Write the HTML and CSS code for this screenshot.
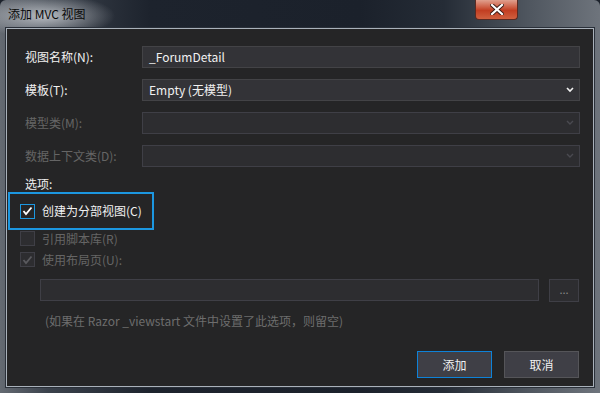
FILE: index.html
```html
<!DOCTYPE html>
<html lang="zh-CN">
<head>
  <meta charset="UTF-8">
  <title>添加 MVC 视图</title>
  <link rel="stylesheet" href="styles.css">
</head>
<body>
  <div class="window">
    <div class="titlebar">
      <span class="title">添加 MVC 视图</span>
      <button class="close-btn">
        <svg width="14" height="11" viewBox="0 0 14 11">
          <path d="M2 1 L12 10 M12 1 L2 10" stroke="#3a1a14" stroke-width="4" stroke-linecap="square"/>
          <path d="M2 1 L12 10 M12 1 L2 10" stroke="#ffffff" stroke-width="2.2" stroke-linecap="square"/>
        </svg>
      </button>
    </div>

    <div class="client">
      <div class="field">
        <label class="field-label">视图名称(N):</label>
        <div class="box">_ForumDetail</div>
      </div>
      <div class="field">
        <label class="field-label">模板(T):</label>
        <div class="box select">
          <span>Empty (无模型)</span>
          <svg class="chev" width="8" height="6" viewBox="0 0 8 6"><path d="M1 1 L4 4 L7 1" fill="none" stroke="#f1f1f1" stroke-width="1.6"/></svg>
        </div>
      </div>
      <div class="field disabled">
        <label class="field-label">模型类(M):</label>
        <div class="box select">
          <span></span>
          <svg class="chev" width="8" height="6" viewBox="0 0 8 6"><path d="M1 1 L4 4 L7 1" fill="none" stroke="#4a4a50" stroke-width="1.4"/></svg>
        </div>
      </div>
      <div class="field disabled">
        <label class="field-label">数据上下文类(D):</label>
        <div class="box select">
          <span></span>
          <svg class="chev" width="8" height="6" viewBox="0 0 8 6"><path d="M1 1 L4 4 L7 1" fill="none" stroke="#4a4a50" stroke-width="1.4"/></svg>
        </div>
      </div>

      <div class="section-title">选项:</div>

      <div class="focus-box">
        <div class="check-row">
          <span class="check checked">
            <svg width="11" height="10" viewBox="0 0 11 10"><path d="M1.5 5 L4 8 L9.5 1.5" fill="none" stroke="#ffffff" stroke-width="1.8"/></svg>
          </span>
          <span>创建为分部视图(C)</span>
        </div>
      </div>
      <div class="check-row disabled">
        <span class="check"></span>
        <span>引用脚本库(R)</span>
      </div>
      <div class="check-row disabled">
        <span class="check">
          <svg width="11" height="10" viewBox="0 0 11 10"><path d="M1.5 5 L4 8 L9.5 1.5" fill="none" stroke="#5a5a5e" stroke-width="1.8"/></svg>
        </span>
        <span>使用布局页(U):</span>
      </div>

      <div class="layout-row">
        <div class="box layout-input"></div>
        <button class="browse">...</button>
      </div>
      <div class="hint">(如果在 Razor _viewstart 文件中设置了此选项，则留空)</div>

      <div class="actions">
        <button class="btn primary">添加</button>
        <button class="btn">取消</button>
      </div>
    </div>
  </div>
</body>
</html>
```

FILE: styles.css
```css
html, body {
  margin: 0;
  padding: 0;
}
body {
  width: 600px;
  height: 393px;
  overflow: hidden;
  background: #1c222b;
  font-family: "Noto Sans CJK SC", "Microsoft YaHei", sans-serif;
  font-size: 12px;
}
.window {
  width: 600px;
  height: 393px;
  box-sizing: border-box;
  padding: 0 6px 6px 6px;
  display: flex;
  flex-direction: column;
  border-radius: 6px 6px 0 0;
  background:
    radial-gradient(ellipse 70px 22px at 45px 16px, rgba(225, 228, 232, 0.75), rgba(225, 228, 232, 0) 100%),
    linear-gradient(to right, #646a72 0%, #3b424c 8%, #1d232d 25%, #1b212b 60%, #252c36 74%, #4f565f 88%, #6e747c 100%);
}
.titlebar {
  height: 28px;
  display: flex;
  align-items: flex-start;
  justify-content: space-between;
  flex-shrink: 0;
}
.title {
  padding: 6px 0 0 2px;
  line-height: 16px;
  color: #0a0a0a;
  font-size: 12px;
}
.close-btn {
  width: 43px;
  height: 20px;
  margin-right: 76px;
  border: 1px solid #5a2a22;
  border-top: none;
  border-radius: 0 0 4px 4px;
  background: linear-gradient(to bottom, #e0a08e 0%, #cc5a40 40%, #c23e22 55%, #d0603f 100%);
  display: flex;
  align-items: center;
  justify-content: center;
  padding: 0;
}
.client {
  flex: 1;
  min-height: 0;
  background: #252526;
  border: 1px solid #a9b1ba;
  box-shadow: 0 0 0 1px #2a3039;
  padding: 17px 13px 0 18px;
  display: flex;
  flex-direction: column;
  color: #f1f1f1;
}
.field {
  display: flex;
  align-items: center;
  height: 22px;
  margin-bottom: 11px;
  flex-shrink: 0;
}
.field-label {
  width: 117px;
  flex-shrink: 0;
  line-height: 16px;
}
.box {
  flex: 1;
  height: 22px;
  box-sizing: border-box;
  background: #333337;
  border: 1px solid #434346;
  padding: 0 6px;
  line-height: 20px;
  color: #f1f1f1;
  display: flex;
  align-items: center;
}
.select {
  justify-content: space-between;
  padding-right: 5px;
}
.field.disabled .field-label {
  color: #656565;
}
.field.disabled .box {
  background: #2d2d30;
  border-color: #3f3f46;
}
.section-title {
  margin-top: -2px;
  line-height: 16px;
  height: 16px;
  flex-shrink: 0;
}
.focus-box {
  margin: 0 0 -2px -17px;
  width: 146px;
  height: 38px;
  flex-shrink: 0;
  box-sizing: border-box;
  border: 2px solid #1c97e0;
  padding-left: 10px;
  display: flex;
  align-items: center;
}
.check-row {
  display: flex;
  align-items: center;
  height: 21px;
  flex-shrink: 0;
  gap: 7px;
  line-height: 16px;
}
.client > .check-row {
  margin-left: -5px;
}
.check {
  width: 15px;
  height: 15px;
  box-sizing: border-box;
  border: 1px solid #3f3f46;
  background: #2d2d30;
  display: flex;
  align-items: center;
  justify-content: center;
}
.check.checked {
  border-color: #1c97e0;
  background: #252526;
}
.check-row.disabled {
  color: #656565;
}
.layout-row {
  display: flex;
  gap: 10px;
  margin: 9px 1px 0 15px;
  height: 22px;
  flex-shrink: 0;
}
.layout-input {
  background: #2d2d30;
  border-color: #3f3f46;
}
.browse {
  width: 30px;
  height: 23px;
  background: #2d2d30;
  border: 1px solid #3f3f46;
  color: #8a8a8a;
  font-family: inherit;
  font-size: 11px;
  padding: 0 0 4px 0;
  line-height: 12px;
}
.hint {
  margin: 12px 0 0 20px;
  color: #6d6d6d;
  line-height: 16px;
}
.actions {
  display: flex;
  justify-content: flex-end;
  gap: 12px;
  margin-top: 22px;
  margin-right: 1px;
}
.btn {
  width: 75px;
  height: 27px;
  box-sizing: border-box;
  background: #3f3f46;
  border: 1px solid #555559;
  color: #f1f1f1;
  font-family: inherit;
  font-size: 12px;
  padding: 0;
}
.btn.primary {
  border-color: #0e82d8;
}
```
